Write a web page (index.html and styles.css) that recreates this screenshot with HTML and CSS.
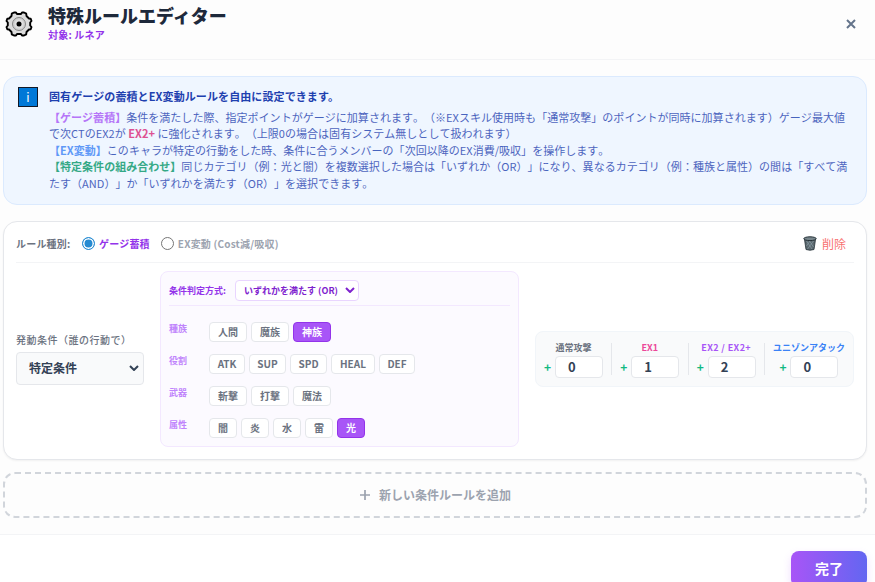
FILE: index.html
```html
<!DOCTYPE html>
<html lang="ja">
  <head>
    <meta charset="UTF-8" />
    <title>特殊ルールエディター</title>
    <link rel="stylesheet" href="styles.css">
  </head>
  <body>
    <header class="header">
      <svg class="gear" viewBox="0 0 28 28">
        <path d="M9 2.500h2l1 1.500h4l1-1.500h2l2.200 1.200.3 2.300 2.500 2.500 1.700.2.800 2.300-1.300 1.500v3l1.300 1.500-.8 2.300-1.700.2-2.500 2.500-.3 2.300-2.200 1.200h-2l-1-1.500h-4l-1 1.500h-2l-2.200-1.200-.3-2.300-2.500-2.500-1.700-.2-.8-2.300 1.300-1.500v-3l-1.300-1.500.8-2.300 1.700-.2 2.500-2.500.3-2.300z" fill="#dcdcdc" stroke="#000" stroke-width="1.900" stroke-linejoin="round" />
        <circle cx="14" cy="14" r="6.500" fill="#d0d0d0" stroke="#888" />
        <circle cx="14" cy="14" r="4.500" fill="#e0e0e0" />
        <circle cx="14" cy="14" r="2.500" fill="#000" />
      </svg>
      <div class="header-text">
        <h1>特殊ルールエディター</h1>
        <p>対象: ルネア</p>
      </div>
      <button class="close-btn" aria-label="閉じる">
        <svg viewBox="0 0 10 10"><path d="M1 1l8 8M9 1l-8 8" fill="none" stroke="#64748b" stroke-width="2" /></svg>
      </button>
    </header>

    <main class="content">
      <section class="info">
        <span class="info-icon">i</span>
        <div class="info-text">
          <h2>固有ゲージの蓄積とEX変動ルールを自由に設定できます。</h2>
          <p>
            <b class="purple">【ゲージ蓄積】</b>条件を満たした際、指定ポイントがゲージに加算されます。（※EXスキル使用時も「通常攻撃」のポイントが同時に加算されます）ゲージ最大値<br>で次CTのEX2が <b class="rose">EX2+</b> に強化されます。（上限0の場合は固有システム無しとして扱われます）<br>
            <b class="blue">【EX変動】</b>このキャラが特定の行動をした時、条件に合うメンバーの「次回以降のEX消費/吸収」を操作します。<br>
            <b class="green">【特定条件の組み合わせ】</b>同じカテゴリ（例：光と闇）を複数選択した場合は「いずれか（OR）」になり、異なるカテゴリ（例：種族と属性）の間は「すべて満<br>たす（AND）」か「いずれかを満たす（OR）」を選択できます。
          </p>
        </div>
      </section>

      <section class="rule">
        <div class="rule-head">
          <span class="rule-label">ルール種別:</span>
          <label class="radio active"><i></i><span>ゲージ蓄積</span></label>
          <label class="radio"><i></i><span>EX変動 (Cost減/吸収)</span></label>
          <button class="delete-btn">
            <svg viewBox="0 0 14 15">
              <path d="M1.500 3.500l1.500 10q4 1.500 8 0l1.500-10z" fill="#5b686e" stroke="#263238" stroke-width=".8" />
              <path d="M3.500 5l5.500 8M6.500 5l4 6M10.500 5l-6 8M7 5l-3.500 5" stroke="#90a4ae" stroke-width=".6" />
              <ellipse cx="7" cy="2.700" rx="6.200" ry="1.900" fill="#78868c" stroke="#263238" />
            </svg>
            削除
          </button>
        </div>

        <div class="rule-body">
          <div class="trigger">
            <span class="trigger-label">発動条件（誰の行動で）</span>
            <div class="select">
              特定条件
              <svg viewBox="0 0 10 6"><path d="M1 1l4 4 4-4" fill="none" stroke="currentColor" stroke-width="2" /></svg>
            </div>
          </div>

          <div class="conditions">
            <div class="method">
              <span>条件判定方式:</span>
              <div class="select small">
                いずれかを満たす (OR)
                <svg viewBox="0 0 10 6"><path d="M1 1l4 4 4-4" fill="none" stroke="currentColor" stroke-width="2" /></svg>
              </div>
            </div>
            <div class="row">
              <span class="row-name">種族</span>
              <button class="chip">人間</button>
              <button class="chip">魔族</button>
              <button class="chip selected">神族</button>
            </div>
            <div class="row">
              <span class="row-name">役割</span>
              <button class="chip w36">ATK</button>
              <button class="chip w37">SUP</button>
              <button class="chip w37">SPD</button>
              <button class="chip w44">HEAL</button>
              <button class="chip w36">DEF</button>
            </div>
            <div class="row">
              <span class="row-name">武器</span>
              <button class="chip">斬撃</button>
              <button class="chip">打撃</button>
              <button class="chip">魔法</button>
            </div>
            <div class="row">
              <span class="row-name">属性</span>
              <button class="chip">闇</button>
              <button class="chip">炎</button>
              <button class="chip">水</button>
              <button class="chip">雷</button>
              <button class="chip selected">光</button>
            </div>
          </div>

          <div class="points">
            <div class="point">
              <span class="point-name">通常攻撃</span>
              <div class="point-value"><b>+</b><span class="number">0</span></div>
            </div>
            <div class="point">
              <span class="point-name pink">EX1</span>
              <div class="point-value"><b>+</b><span class="number">1</span></div>
            </div>
            <div class="point">
              <span class="point-name purple wide">EX2 / EX2+</span>
              <div class="point-value"><b>+</b><span class="number">2</span></div>
            </div>
            <div class="point">
              <span class="point-name blue">ユニゾンアタック</span>
              <div class="point-value"><b>+</b><span class="number">0</span></div>
            </div>
          </div>
        </div>
      </section>

      <button class="add-btn">
        <svg viewBox="0 0 12 12"><path d="M6 1v10M1 6h10" stroke="currentColor" stroke-width="1.700" /></svg>
        <span>新しい条件ルールを追加</span>
      </button>
    </main>

    <footer class="footer">
      <button class="done-btn">完了</button>
    </footer>
  </body>
</html>
```
FILE: styles.css
```css
* {
  margin: 0;
  padding: 0;
  box-sizing: border-box;
}
body {
  height: 582px;
  overflow: hidden;
  font-family: "Noto Sans CJK JP", sans-serif;
  text-spacing-trim: space-all;
  background: #fdfdfd;
  color: #1e293b;
  white-space: nowrap;
}

button {
  font-family: inherit;
  border: none;
  background: none;
}

.purple {
  color: #a855f7;
}
.pink {
  color: #ec4899;
}
.rose {
  color: #db2777;
}
.blue {
  color: #3b82f6;
}
.green {
  color: #059669;
}

.header {
  display: flex;
  align-items: center;
  height: 60px;
  padding: 0 19px 11px 5px;
  border-bottom: 1px solid #f3f4f6;
}

.gear {
  width: 28px;
  height: 28px;
}

.header-text {
  margin-left: 15px;
  padding-bottom: 3px;
  flex-grow: 1;
}

.header h1 {
  font-size: 18px;
  line-height: 24px;
  font-weight: 900;
}

.header p {
  font-size: 10px;
  line-height: 15px;
  letter-spacing: 0.2px;
  font-weight: bold;
  color: #9333ea;
}

.close-btn svg {
  display: block;
  width: 10px;
  height: 10px;
}

.content {
  padding: 16px 8px 0 3px;
}

.info {
  display: flex;
  gap: 11px;
  height: 129px;
  padding: 10px 14px;
  border: 1px solid #dbeafe;
  border-radius: 14px;
  background: #eff6ff;
  color: #1e40af;
}

.info-icon {
  width: 20px;
  height: 20px;
  border: 1px solid #111827;
  background: #0078d7;
  color: white;
  font-size: 12px;
  line-height: 18px;
  text-align: center;
  flex-shrink: 0;
}

.info h2 {
  font-size: 11px;
  line-height: 18px;
  letter-spacing: 0.1px;
  margin-bottom: 4px;
}

.info p {
  font-size: 11px;
  line-height: 16.4px;
  letter-spacing: 0.03px;
  font-kerning: none;
  opacity: 0.8;
}

.rule {
  height: 239px;
  margin-top: 16px;
  padding: 0 12px;
  border: 1px solid #e5e7eb;
  border-radius: 14px;
  background: white;
  box-shadow: 0 1px 2px rgba(0, 0, 0, 0.05);
}

.rule-head {
  display: flex;
  align-items: center;
  height: 41px;
  padding-top: 2px;
  border-bottom: 1px solid #f3f4f6;
  font-size: 10px;
  letter-spacing: 0.2px;
  font-weight: bold;
  color: #6b7280;
}

.rule-label {
  width: 66px;
}

.radio {
  display: flex;
  align-items: center;
  gap: 4px;
  margin-right: 11px;
  color: #9ca3af;
}

.radio i {
  width: 13px;
  height: 13px;
  border: 1px solid #767676;
  border-radius: 50%;
  background: white;
}

.radio.active {
  color: #9333ea;
}

.radio.active i {
  border-color: #268bd2;
  background: #268bd2;
  box-shadow: inset 0 0 0 1.5px white;
}

.delete-btn {
  display: flex;
  align-items: center;
  gap: 5px;
  margin-left: auto;
  padding-right: 8px;
  font-size: 12px;
  color: #f87171;
}

.delete-btn svg {
  width: 14px;
  height: 15px;
}

.rule-body {
  display: flex;
  align-items: center;
  height: 191px;
}

.trigger {
  width: 128px;
  padding-bottom: 1px;
}

.trigger-label {
  display: block;
  font-size: 10px;
  line-height: 15px;
  letter-spacing: 0.5px;
  font-weight: 500;
  color: #6b7280;
  margin-bottom: 5px;
}

.select {
  display: flex;
  align-items: center;
  justify-content: space-between;
  height: 33px;
  padding: 0 4px 1px 12px;
  border: 1px solid #e5e7eb;
  border-radius: 4px;
  background: #f9fafb;
  font-size: 12px;
  font-weight: bold;
  color: #334155;
}

.select svg {
  width: 10px;
  height: 6px;
}

.select.small {
  width: 124px;
  height: 21px;
  padding: 0 3px 0 8px;
  border-color: #e9d5ff;
  background: white;
  font-size: 9px;
  color: #7e22ce;
}

.conditions {
  width: 359px;
  height: 176px;
  margin-left: 16px;
  padding: 8px;
  border: 1px solid #f3e8ff;
  border-radius: 8px;
  background: #fcfaff;
}

.method {
  display: flex;
  align-items: center;
  height: 26px;
  padding-bottom: 4px;
  margin-bottom: 12px;
  border-bottom: 1px solid #f3e8ff;
  font-size: 9px;
  font-weight: bold;
  color: #9333ea;
}

.method > span {
  width: 66px;
}

.row {
  display: flex;
  gap: 4px;
  height: 32px;
  padding-top: 4px;
}

.row-name {
  width: 36px;
  font-size: 9px;
  line-height: 13px;
  font-weight: bold;
  color: #c084fc;
}

.chip {
  height: 20px;
  padding: 0 8px;
  border: 1px solid #e5e7eb;
  border-radius: 4px;
  background: white;
  font-size: 10px;
  line-height: 18px;
  font-weight: bold;
  color: #6b7280;
}

.chip.selected {
  border-color: #9333ea;
  background: #a855f7;
  color: white;
}

.w36,
.w37,
.w44 {
  padding: 0;
}
.w36 {
  width: 36px;
}
.w37 {
  width: 37px;
}
.w44 {
  width: 44px;
}

.points {
  display: flex;
  justify-content: space-between;
  width: 319px;
  height: 56px;
  margin-left: auto;
  padding: 11px 8px;
  border: 1px solid #f1f5f9;
  border-radius: 8px;
  background: #f9fafb;
}

.point {
  display: flex;
  flex-direction: column;
  align-items: center;
}

.point + .point {
  padding-left: 8px;
  border-left: 1px solid #e5e7eb;
}

.point-name {
  font-size: 9px;
  line-height: 9px;
  font-weight: bold;
}

.point-name:not([class*=" "]) {
  color: #6b7280;
}

.point-name.wide {
  letter-spacing: 0.4px;
}

.point-value {
  display: flex;
  align-items: center;
  margin-top: 4px;
}

.point-value b {
  width: 11px;
  font-size: 12px;
  line-height: 22px;
  color: #10b981;
}

.number {
  width: 48px;
  height: 22px;
  padding-left: 12px;
  border: 1px solid #e5e7eb;
  border-radius: 4px;
  background: white;
  font-size: 13px;
  line-height: 20px;
  font-weight: bold;
  color: #334155;
}

.add-btn {
  display: flex;
  align-items: center;
  justify-content: center;
  gap: 8px;
  width: 100%;
  height: 46px;
  margin-top: 12px;
  border: 2px dashed #d1d5db;
  border-radius: 12px;
  font-size: 12px;
  font-weight: bold;
  color: #9ca3af;
}

.add-btn svg {
  width: 12px;
  height: 12px;
}

.add-btn span {
  padding-bottom: 2px;
}

.footer {
  display: flex;
  justify-content: flex-end;
  height: 70px;
  margin-top: 16px;
  padding: 16px 8px;
  border-top: 1px solid #f3f4f6;
  background: white;
}

.done-btn {
  width: 76px;
  height: 36px;
  padding-bottom: 2px;
  border-radius: 8px;
  background: linear-gradient(to right, #a855f7, #6366f1);
  box-shadow: 0 4px 8px rgba(168, 85, 247, 0.2);
  color: white;
  font-size: 14px;
  font-weight: bold;
}
```
